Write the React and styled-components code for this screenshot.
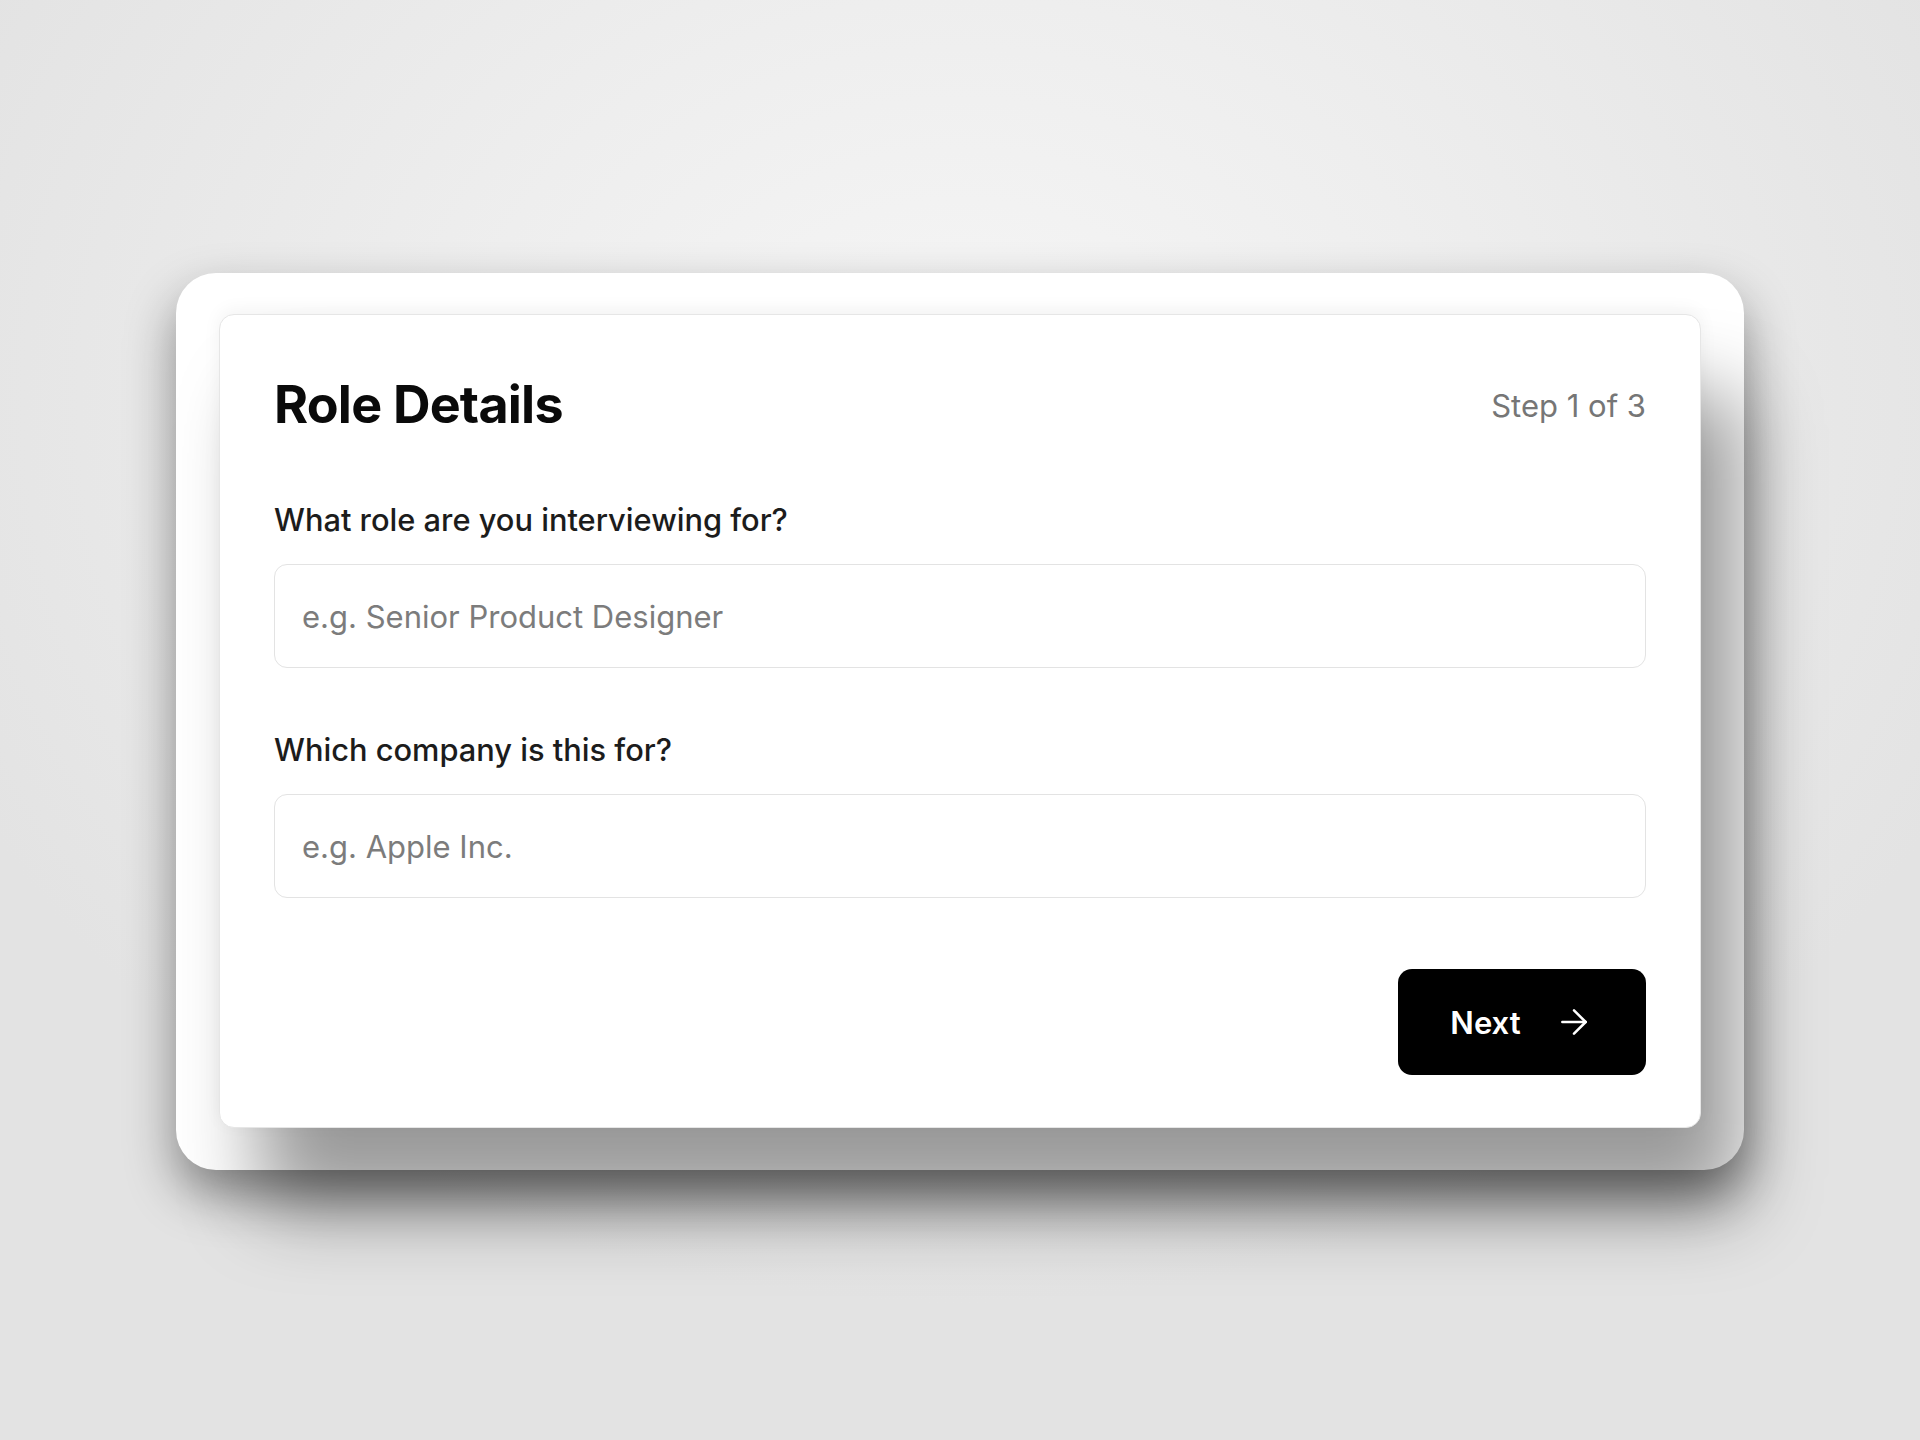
import React from "react";
import styled, { createGlobalStyle } from "styled-components";
import { ArrowRight } from "lucide-react";

const GlobalStyle = createGlobalStyle`
  html, body {
    margin: 0;
    padding: 0;
  }
  body {
    font-family: Inter, "Noto Sans", "Liberation Sans", sans-serif;
    -webkit-font-smoothing: antialiased;
  }
  * {
    box-sizing: border-box;
  }
`;

const App = () => {
  return (
    <>
      <GlobalStyle />
      <Page>
        <Frame>
          <Card>
            <Header>
              <Title>Role Details</Title>
              <StepText>Step 1 of 3</StepText>
            </Header>

            <Fields>
              <Field>
                <Label htmlFor="role">What role are you interviewing for?</Label>
                <Input id="role" placeholder="e.g. Senior Product Designer" />
              </Field>
              <Field>
                <Label htmlFor="company">Which company is this for?</Label>
                <Input id="company" placeholder="e.g. Apple Inc." />
              </Field>
            </Fields>

            <Footer>
              <NextBtn type="button">
                Next
                <ArrowRight size={40} strokeWidth={1.5} />
              </NextBtn>
            </Footer>
          </Card>
        </Frame>
      </Page>
    </>
  );
};

const Page = styled.div`
  min-height: 1440px;
  display: flex;
  flex-direction: column;
  align-items: center;
  padding-top: 273px;
  background: radial-gradient(
    ellipse 1100px 900px at 50% 28%,
    #f6f6f6 0%,
    #eeeeee 45%,
    #e3e3e3 100%
  );
`;

const Frame = styled.div`
  width: 1568px;
  padding: 41px 43px 42px;
  background: #ffffff;
  border-radius: 40px;
  box-shadow: 0 24px 50px rgba(0, 0, 0, 0.42);
`;

const Card = styled.div`
  background: #ffffff;
  border: 1px solid #e6e6e6;
  border-radius: 15px;
  padding: 59px 54px 52px 54px;
  box-shadow: 40px 80px 80px rgba(0, 0, 0, 0.4),
    0 -4px 18px rgba(0, 0, 0, 0.05);
`;

const Header = styled.div`
  display: flex;
  justify-content: space-between;
  align-items: center;
  margin-bottom: 66px;
`;

const Title = styled.h1`
  margin: 0;
  font-size: 52px;
  line-height: 1.2;
  font-weight: 700;
  letter-spacing: -0.015em;
  color: #0a0a0a;
`;

const StepText = styled.span`
  font-size: 31px;
  line-height: 1.2;
  color: #767676;
`;

const Fields = styled.div`
  display: flex;
  flex-direction: column;
  gap: 64px;
`;

const Field = styled.div`
  display: flex;
  flex-direction: column;
  gap: 25px;
`;

const Label = styled.label`
  font-size: 30.8px;
  line-height: 1.2;
  font-weight: 500;
  color: #1c1c1c;
`;

const Input = styled.input`
  width: 100%;
  height: 104px;
  padding: 0 27px;
  border: 1.5px solid #e3e3e3;
  border-radius: 13px;
  background: #ffffff;
  font-family: inherit;
  font-size: 31px;
  color: #1c1c1c;
  outline: none;

  &::placeholder {
    color: #7c7c7c;
  }
`;

const Footer = styled.div`
  display: flex;
  justify-content: flex-end;
  margin-top: 71px;
`;

const NextBtn = styled.button`
  display: flex;
  align-items: center;
  justify-content: center;
  gap: 33px;
  width: 248px;
  height: 106px;
  border: none;
  border-radius: 14px;
  background: #000000;
  color: #ffffff;
  font-family: inherit;
  font-size: 31px;
  font-weight: 600;
  cursor: pointer;
`;

export default App;
